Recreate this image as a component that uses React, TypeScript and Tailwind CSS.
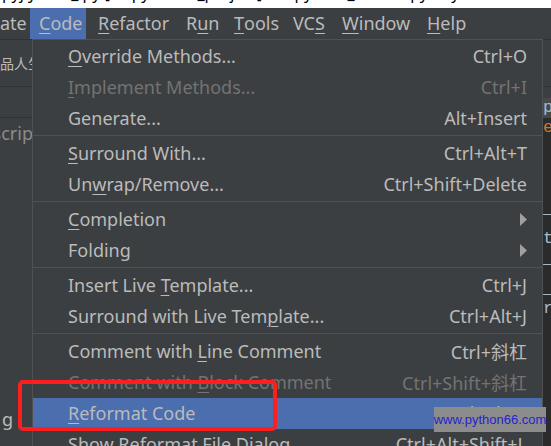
import React from "react";

type Item = {
  label: React.ReactNode;
  shortcut?: React.ReactNode;
  disabled?: boolean;
  submenu?: boolean;
  active?: boolean;
};

// underline one mnemonic letter
const M = ({ children }: { children: React.ReactNode }) => (
  <span className="underline underline-offset-[3px] decoration-1">{children}</span>
);

const cjk = <span className="font-['Noto_Sans_CJK_SC',sans-serif]">斜杠</span>;

const groups: Item[][] = [
  [
    { label: <><M>O</M>verride Methods...</>, shortcut: "Ctrl+O" },
    { label: <><M>I</M>mplement Methods...</>, shortcut: "Ctrl+I", disabled: true },
    { label: "Generate...", shortcut: "Alt+Insert" },
  ],
  [
    { label: <><M>S</M>urround With...</>, shortcut: "Ctrl+Alt+T" },
    { label: <>Un<M>w</M>rap/Remove...</>, shortcut: "Ctrl+Shift+Delete" },
  ],
  [
    { label: <><M>C</M>ompletion</>, submenu: true },
    { label: "Folding", submenu: true },
  ],
  [
    { label: <>Insert Live <M>T</M>emplate...</>, shortcut: "Ctrl+J" },
    { label: <>Surround with Live Tem<M>p</M>late...</>, shortcut: "Ctrl+Alt+J" },
  ],
  [
    { label: <>Comment with <M>L</M>ine Comment</>, shortcut: <>Ctrl+{cjk}</> },
    { label: <>Comment with <M>B</M>lock Comment</>, shortcut: <>Ctrl+Shift+{cjk}</>, disabled: true },
    { label: <><M>R</M>eformat Code</>, shortcut: "Ctrl+Alt+L", active: true },
    { label: "Show Reformat File Dialog", shortcut: "Ctrl+Alt+Shift+L" },
  ],
];

const menubar = [
  { label: "ate", w: "w-[30px]", pl: "pl-0" },
  { label: <><M>C</M>ode</>, w: "w-[56px]", pl: "pl-[9px]", active: true },
  { label: <><M>R</M>efactor</>, w: "w-[92px]", pl: "pl-[12px]" },
  { label: <>R<M>u</M>n</>, w: "w-[48px]", pl: "pl-[8px]" },
  { label: <><M>T</M>ools</>, w: "w-[59px]", pl: "pl-[8px]" },
  { label: <>VC<M>S</M></>, w: "w-[49px]", pl: "pl-[8px]" },
  { label: <><M>W</M>indow</>, w: "w-[85px]", pl: "pl-[8px]" },
  { label: <><M>H</M>elp</>, w: "w-[80px]", pl: "pl-[8px]" },
];

const MenuRow = ({ item }: { item: Item }) => (
  <div
    className={`flex h-[31px] shrink-0 items-center justify-between pl-[35px] pr-[15px] whitespace-nowrap ${
      item.active ? "bg-[#4b6eaf]" : ""
    } ${item.disabled ? "text-[#737373]" : "text-[#bbbbbb]"}`}
  >
    <span>{item.label}</span>
    {item.submenu ? (
      <svg width="7" height="13" viewBox="0 0 7 13">
        <path d="M0 0 L7 6.5 L0 13 Z" fill="#a0a0a0" />
      </svg>
    ) : (
      <span>{item.shortcut}</span>
    )}
  </div>
);

export default function App() {
  return (
    <div className="flex h-[446px] w-[551px] flex-col overflow-hidden bg-[#3c3f41] font-['Noto_Sans',sans-serif] text-[18px] text-[#bbbbbb]">
      {/* window title, only its descenders are visible */}
      <div className="h-[8px] shrink-0 overflow-hidden bg-white">
        <div className="-mt-[17px] whitespace-nowrap pl-[2px] text-[16px] leading-[20px] text-black">
          pyj ython_ py [D:\pycharm_project] - ...\python_format.py - PyCharm
        </div>
      </div>

      {/* menu bar */}
      <div className="flex h-[31px] shrink-0 text-[18px]">
        {menubar.map((m, i) => (
          <div
            key={i}
            className={`flex shrink-0 items-center whitespace-nowrap ${m.w} ${m.pl} ${
              m.active ? "bg-[#4b6eaf]" : ""
            }`}
          >
            {m.label}
          </div>
        ))}
      </div>

      {/* ide body behind the popup */}
      <div className="relative flex flex-1">
        <div className="flex w-[33px] shrink-0 flex-col overflow-hidden">
          <div className="flex h-[48px] shrink-0 items-center border-t border-b border-[#323232] whitespace-nowrap">
            <span className="font-['Noto_Sans_CJK_SC',sans-serif] text-[14px]">品人生</span>
          </div>
          <div className="h-[31px] shrink-0 border-b border-[#323232]" />
          <div className="flex h-[30px] shrink-0 items-center justify-end whitespace-nowrap text-[#8c8c8c]">
            Descrip
          </div>
          <div className="flex-1" />
          <div className="flex h-[40px] shrink-0 items-start justify-end whitespace-nowrap pr-[20px]">
            g
          </div>
        </div>
        <div className="flex-1" />
        <div className="flex w-[9px] shrink-0 flex-col overflow-hidden pl-[1px] font-['Liberation_Mono',monospace] text-[17px] leading-[20px]">
          <div className="h-[48px] shrink-0 border-t border-b border-[#323232]" />
          <div className="h-[11px] shrink-0" />
          <div className="h-[20px] shrink-0 bg-[#45494a] text-[#a9b7c6]">p</div>
          <div className="flex flex-1 flex-col bg-[#2b2b2b]">
            <div className="h-[26px] text-[#cc7832]">e</div>
            <div className="h-[55px]" />
            <div className="h-[30px] text-[#a9b7c6]">_</div>
            <div className="h-[20px] text-[#a9b7c6]">t</div>
            <div className="h-[30px] text-[#a9b7c6]">_</div>
            <div className="h-[20px] text-[#a9b7c6]">_</div>
            <div className="h-[30px] text-[#a9b7c6]">r</div>
          </div>
        </div>

        {/* Code popup menu */}
        <div className="absolute left-[32px] top-0 flex h-[420px] w-[511px] flex-col border border-[#515151] bg-[#3c3f41] pt-[1px]">
          {groups.map((g, gi) => (
            <React.Fragment key={gi}>
              {gi > 0 && (
                <div className="h-[4px] shrink-0 pt-[1px]">
                  <div className="h-px bg-[#515151]" />
                </div>
              )}
              {g.map((item, ii) => (
                <MenuRow key={ii} item={item} />
              ))}
            </React.Fragment>
          ))}
        </div>

        {/* red annotation box */}
        <div className="absolute left-[18px] top-[341px] h-[51px] w-[259px] rounded-[5px] border-4 border-[#ff1e1e]" />

        {/* watermark */}
        <div className="absolute left-[434px] top-[368px] flex h-[25px] w-[112px] items-center justify-center bg-[#8c8c8c] font-['Liberation_Sans',sans-serif] text-[13px] text-[#2323d6]">
          www.python66.com
        </div>
      </div>
    </div>
  );
}
